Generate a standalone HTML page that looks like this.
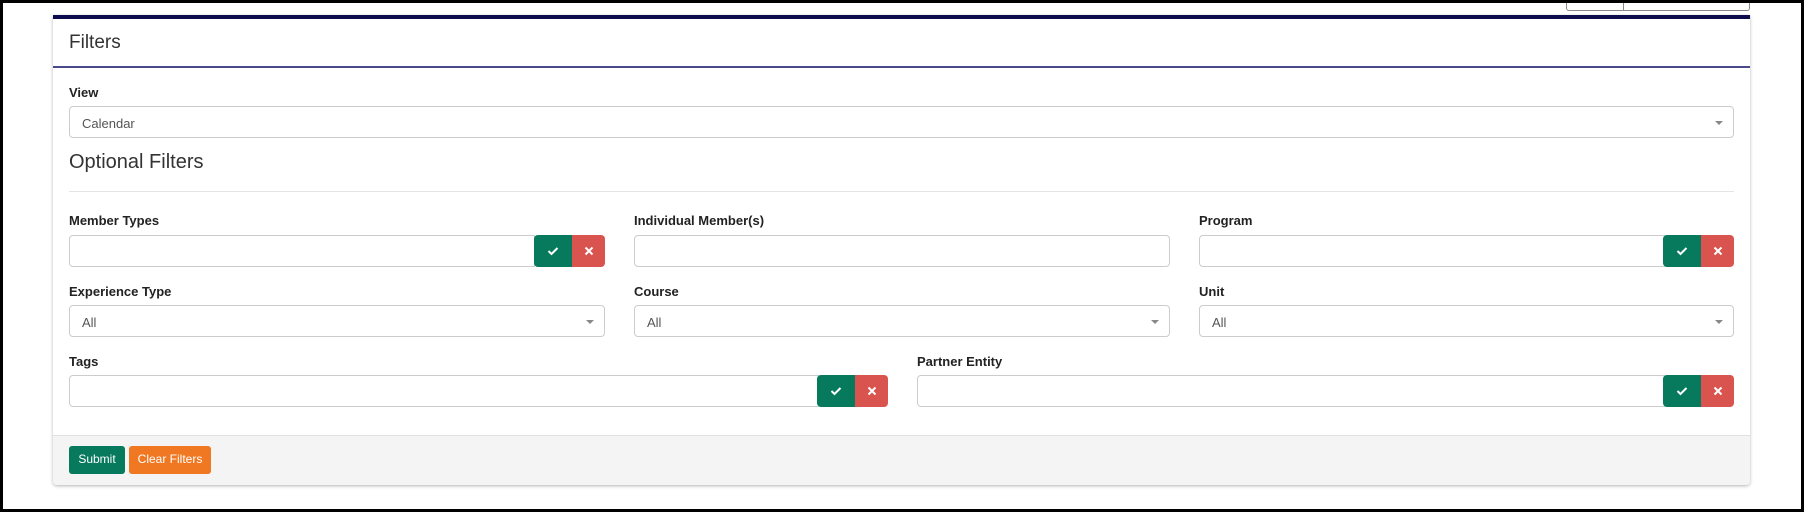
<!DOCTYPE html>
<html><head><style>
*{box-sizing:border-box;margin:0;padding:0}
body{width:1804px;height:512px;overflow:hidden;background:#fff;font-family:"Liberation Sans",Arial,sans-serif;position:relative}
.frame{position:absolute;left:0;top:0;width:1804px;height:512px;border:3px solid #000}
.abs{position:absolute}
.panel{left:53px;top:15px;width:1697px;height:470px;border-top:4px solid #0b0b4e;background:#fff;box-shadow:0 1px 3px rgba(0,0,0,.3);border-radius:0 0 4px 4px}
.lbl{position:absolute;font-size:13px;font-weight:bold;color:#222}
.inp{position:absolute;height:32px;border:1px solid #ccc;border-radius:4px;background:#fff;font-size:13px;color:#555;padding:9px 12px}
.arr{position:absolute;right:10px;top:14px;width:0;height:0;border-left:4px solid transparent;border-right:4px solid transparent;border-top:4px solid #888}
.ok{position:absolute;height:32px;width:38px;background:#077a5e;border-radius:4px 0 0 4px}
.no{position:absolute;height:32px;width:33px;background:#d9534f;border-radius:0 4px 4px 0}
.ok svg,.no svg{position:absolute;left:50%;top:50%;transform:translate(-50%,-50%)}
.btn{position:absolute;top:446px;height:28px;color:#fff;font-size:12px;text-align:center;line-height:27px;border-radius:3px}
</style></head><body>
<div class="abs" style="left:1566px;top:0;width:184px;height:11px;border:1px solid #888;border-top:none;border-radius:0 0 3px 3px"></div>
<div class="abs" style="left:1623px;top:0;width:1px;height:11px;background:#888"></div>
<div class="abs panel"></div>
<div class="abs" style="left:69px;top:32px;font-size:19px;color:#333">Filters</div>
<div class="abs" style="left:53px;top:66px;width:1697px;height:2px;background:#4a4a8a"></div>
<div class="lbl" style="left:69px;top:85px">View</div>
<div class="inp" style="left:69px;top:106px;width:1665px">Calendar<div class="arr"></div></div>
<div class="abs" style="left:69px;top:151px;font-size:20px;color:#333">Optional Filters</div>
<div class="abs" style="left:69px;top:191px;width:1665px;height:1px;background:#e5e5e5"></div>

<div class="lbl" style="left:69px;top:213px">Member Types</div>
<div class="inp" style="left:69px;top:235px;width:466px;border-radius:4px 0 0 4px"></div>
<div class="ok" style="left:534px;top:235px"><svg width="12" height="10" viewBox="0 0 12 10"><path d="M1.5 5 L4.5 8 L10.5 2" stroke="#fff" stroke-width="2" fill="none"/></svg></div>
<div class="no" style="left:572px;top:235px"><svg width="9" height="9" viewBox="0 0 9 9"><path d="M1 1 L8 8 M8 1 L1 8" stroke="#fff" stroke-width="2"/></svg></div>

<div class="lbl" style="left:634px;top:213px">Individual Member(s)</div>
<div class="inp" style="left:634px;top:235px;width:536px"></div>

<div class="lbl" style="left:1199px;top:213px">Program</div>
<div class="inp" style="left:1199px;top:235px;width:466px;border-radius:4px 0 0 4px"></div>
<div class="ok" style="left:1663px;top:235px"><svg width="12" height="10" viewBox="0 0 12 10"><path d="M1.5 5 L4.5 8 L10.5 2" stroke="#fff" stroke-width="2" fill="none"/></svg></div>
<div class="no" style="left:1701px;top:235px"><svg width="9" height="9" viewBox="0 0 9 9"><path d="M1 1 L8 8 M8 1 L1 8" stroke="#fff" stroke-width="2"/></svg></div>

<div class="lbl" style="left:69px;top:284px">Experience Type</div>
<div class="inp" style="left:69px;top:305px;width:536px">All<div class="arr"></div></div>
<div class="lbl" style="left:634px;top:284px">Course</div>
<div class="inp" style="left:634px;top:305px;width:536px">All<div class="arr"></div></div>
<div class="lbl" style="left:1199px;top:284px">Unit</div>
<div class="inp" style="left:1199px;top:305px;width:535px">All<div class="arr"></div></div>

<div class="lbl" style="left:69px;top:354px">Tags</div>
<div class="inp" style="left:69px;top:375px;width:750px;border-radius:4px 0 0 4px"></div>
<div class="ok" style="left:817px;top:375px"><svg width="12" height="10" viewBox="0 0 12 10"><path d="M1.5 5 L4.5 8 L10.5 2" stroke="#fff" stroke-width="2" fill="none"/></svg></div>
<div class="no" style="left:855px;top:375px"><svg width="9" height="9" viewBox="0 0 9 9"><path d="M1 1 L8 8 M8 1 L1 8" stroke="#fff" stroke-width="2"/></svg></div>

<div class="lbl" style="left:917px;top:354px">Partner Entity</div>
<div class="inp" style="left:917px;top:375px;width:748px;border-radius:4px 0 0 4px"></div>
<div class="ok" style="left:1663px;top:375px"><svg width="12" height="10" viewBox="0 0 12 10"><path d="M1.5 5 L4.5 8 L10.5 2" stroke="#fff" stroke-width="2" fill="none"/></svg></div>
<div class="no" style="left:1701px;top:375px"><svg width="9" height="9" viewBox="0 0 9 9"><path d="M1 1 L8 8 M8 1 L1 8" stroke="#fff" stroke-width="2"/></svg></div>

<div class="abs" style="left:53px;top:435px;width:1697px;height:50px;background:#f4f4f4;border-top:1px solid #e0e0e0;border-radius:0 0 4px 4px"></div>
<div class="btn" style="left:69px;width:56px;background:#077a5e">Submit</div>
<div class="btn" style="left:129px;width:82px;background:#f07822">Clear Filters</div>
<div class="frame"></div>
</body></html>
